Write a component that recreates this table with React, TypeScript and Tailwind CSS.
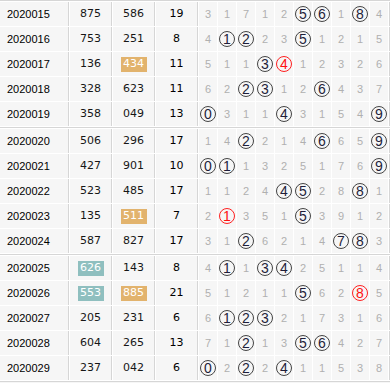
import React from "react";

type Row = {
  issue: string;
  a: string;
  aHl?: "teal" | "orange";
  b: string;
  bHl?: "teal" | "orange";
  sum: string;
  d: (string | number)[];
};

// digit entry: number => plain gray; "c" => circled; "r" => red circled
const rows: Row[] = [
  { issue: "2020015", a: "875", b: "586", sum: "19", d: [3, 1, 7, 1, 2, "c", "c", 1, "c", 4] },
  { issue: "2020016", a: "753", b: "251", sum: "8", d: [4, "c", "c", 2, 3, "c", 1, 2, 1, 5] },
  { issue: "2020017", a: "136", b: "434", bHl: "orange", sum: "11", d: [5, 1, 1, "c", "r", 1, 2, 3, 2, 6] },
  { issue: "2020018", a: "328", b: "623", sum: "11", d: [6, 2, "c", "c", 1, 2, "c", 4, 3, 7] },
  { issue: "2020019", a: "358", b: "049", sum: "13", d: ["c", 3, 1, 1, "c", 3, 1, 5, 4, "c"] },
  { issue: "2020020", a: "506", b: "296", sum: "17", d: [1, 4, "c", 2, 1, 4, "c", 6, 5, "c"] },
  { issue: "2020021", a: "427", b: "901", sum: "10", d: ["c", "c", 1, 3, 2, 5, 1, 7, 6, "c"] },
  { issue: "2020022", a: "523", b: "485", sum: "17", d: [1, 1, 2, 4, "c", "c", 2, 8, "c", 1] },
  { issue: "2020023", a: "135", b: "511", bHl: "orange", sum: "7", d: [2, "r", 3, 5, 1, "c", 3, 9, 1, 2] },
  { issue: "2020024", a: "587", b: "827", sum: "17", d: [3, 1, "c", 6, 2, 1, 4, "c", "c", 3] },
  { issue: "2020025", a: "626", aHl: "teal", b: "143", sum: "8", d: [4, "c", 1, "c", "c", 2, 5, 1, 1, 4] },
  { issue: "2020026", a: "553", aHl: "teal", b: "885", bHl: "orange", sum: "21", d: [5, 1, 2, 1, 1, "c", 6, 2, "r", 5] },
  { issue: "2020027", a: "205", b: "231", sum: "6", d: [6, "c", "c", "c", 2, 1, 7, 3, 1, 6] },
  { issue: "2020028", a: "604", b: "265", sum: "13", d: [7, 1, "c", 1, 3, "c", "c", 4, 2, 7] },
  { issue: "2020029", a: "237", b: "042", sum: "6", d: ["c", 2, "c", 2, "c", 1, 1, 5, 3, 8] },
];

const groups = [rows.slice(0, 5), rows.slice(5, 10), rows.slice(10, 15)];

function Num({ v, hl }: { v: string; hl?: "teal" | "orange" }) {
  if (hl) {
    return (
      <span
        className={
          "inline-flex h-[15px] w-[26px] items-center justify-center text-white " +
          (hl === "teal" ? "bg-[#8fbfbf]" : "bg-[#e2b36d]")
        }
      >
        {v}
      </span>
    );
  }
  return <span className="text-[#161616]">{v}</span>;
}

function DigitCell({ v, idx }: { v: string | number; idx: number }) {
  const base = "flex h-full w-[19px] items-center justify-center border-r border-r-white";
  if (v === "c" || v === "r") {
    const red = v === "r";
    return (
      <div className={base}>
        <span
          className={
            "flex h-[16px] w-[16px] items-center justify-center rounded-full border text-[14px] leading-none " +
            (red ? "border-[#ff2020] text-[#ff1010]" : "border-[#444] text-[#1e1e3a]")
          }
        >
          {idx}
        </span>
      </div>
    );
  }
  return (
    <div className={base}>
      <span className="text-[11px] text-[#b0b0b0]">{v}</span>
    </div>
  );
}

const mono = { fontFamily: '"DejaVu Sans", Verdana, sans-serif' };

export default function App() {
  return (
    <div
      className="w-[390px] h-[383px] overflow-hidden bg-[#f6f6f6]"
      style={{ fontFamily: '"Liberation Sans", Arial, sans-serif' }}
    >
      {groups.map((g, gi) => (
        <div key={gi}>
          <div className="h-px bg-[#d6d6d6]" />
          <div className="h-px bg-white" />
          {g.map((r) => (
            <div key={r.issue} className="flex h-[25px] border-b border-b-white">
              <div className="flex w-[69px] items-center border-r border-r-[#d6d6d6] pl-[7px] text-[11px] text-black">
                {r.issue}
              </div>
              <div
                className="flex w-[43px] items-center justify-center border-l border-l-white border-r border-r-[#d6d6d6] text-[11px]"
                style={mono}
              >
                <Num v={r.a} hl={r.aHl} />
              </div>
              <div
                className="flex w-[43px] items-center justify-center border-l border-l-white border-r border-r-[#d6d6d6] text-[11px]"
                style={mono}
              >
                <Num v={r.b} hl={r.bHl} />
              </div>
              <div
                className="flex w-[43px] items-center justify-center border-l border-l-white border-r border-r-[#d6d6d6] text-[11px] text-black"
                style={mono}
              >
                {r.sum}
              </div>
              <div className="w-px bg-white" />
              {r.d.map((v, i) => (
                <DigitCell key={i} v={v} idx={i} />
              ))}
              <div className="w-px bg-[#d6d6d6]" />
            </div>
          ))}
        </div>
      ))}
      <div className="h-px bg-[#d6d6d6]" />
    </div>
  );
}
